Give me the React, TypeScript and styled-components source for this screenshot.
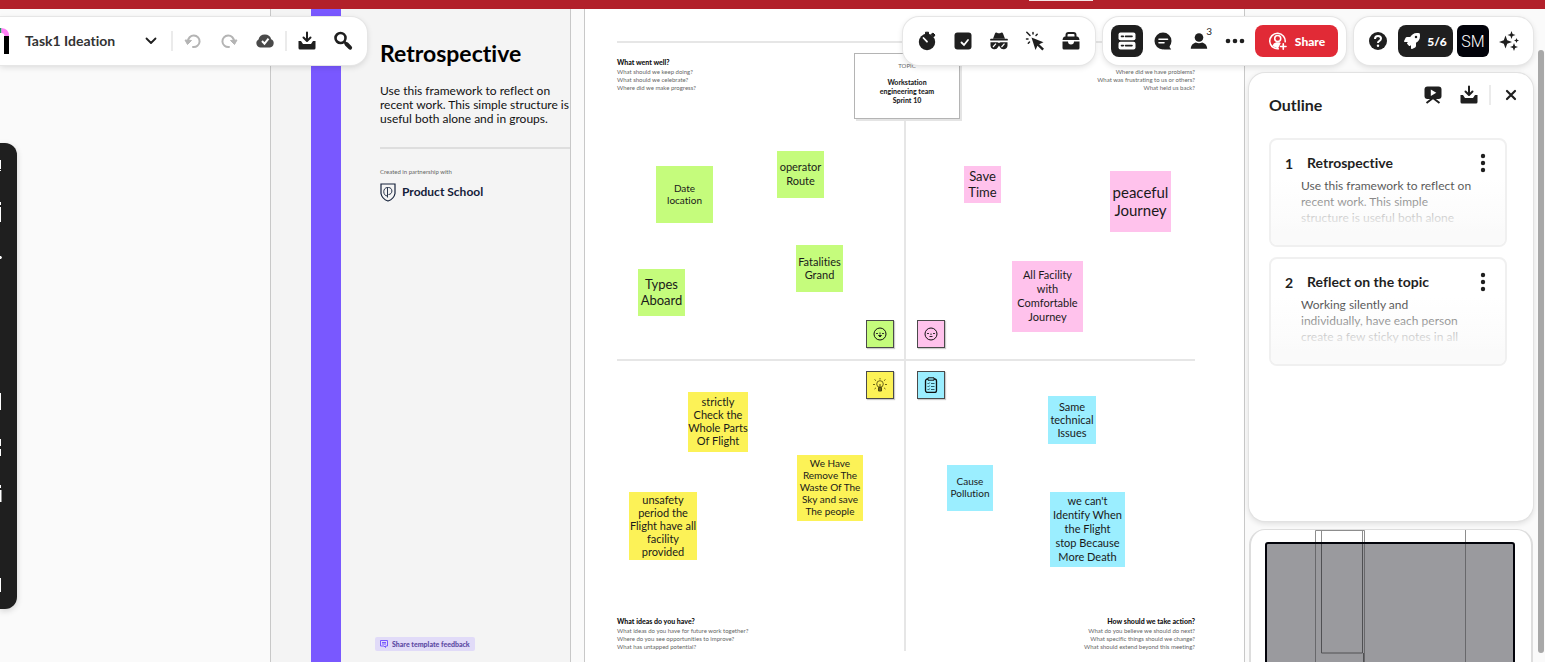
import React from "react";
import styled, { createGlobalStyle } from "styled-components";
import { FaRocket } from "react-icons/fa";

const ink = "#1f1f1f";

const GlobalStyle = createGlobalStyle`
  * { box-sizing: border-box; }
  body {
    margin: 0;
    overflow: hidden;
    font-family: Lato, "Liberation Sans", sans-serif;
    font-variant-ligatures: none;
    color: ${ink};
    background: #fafafa;
  }
  button { font: inherit; color: inherit; cursor: pointer; }
  h1, h2, h3, p, ol, ul { margin: 0; padding: 0; }
  ol, ul { list-style: none; }
  svg { display: block; flex: none; }
`;

const Page = styled.div`
  display: flex;
  flex-direction: column;
  height: 100vh;
`;

const BrowserEdge = styled.div`
  flex: none;
  height: 9px;
  padding-left: 1029px;
  background: #b2202a;
`;

const EdgeTab = styled.div`
  width: 64px;
  height: 1px;
  background: #f4e4e5;
`;

const Workspace = styled.div`
  position: relative;
  flex: 1;
  min-height: 0;
  overflow: hidden;
`;

/* Canvas */

const Canvas = styled.main`
  display: flex;
  gap: 13px;
  height: 100%;
  padding-left: 270px;
`;

const Template = styled.section`
  flex: none;
  display: flex;
  width: 301px;
  border: solid #c8c8c8;
  border-width: 0 1px;
  background: #f4f4f4;
`;

const Stripe = styled.div`
  flex: none;
  width: 30px;
  margin-left: 40px;
  background: #7958ff;
`;

const TemplateBody = styled.div`
  flex: 1;
  display: flex;
  flex-direction: column;
  padding: 28px 0 11px 39px;
`;

const TemplateTitle = styled.h1`
  font-size: 23px;
  line-height: 32px;
  color: #000;
`;

const TemplateText = styled.p`
  margin-top: 15px;
  font-size: 12px;
  line-height: 14px;
  white-space: nowrap;
  color: #111;
`;

const Divider = styled.hr`
  width: 100%;
  height: 2px;
  margin: 21px 0 19px;
  border: 0;
  background: #dedede;
`;

const Small = styled.p`
  font-size: 6px;
  line-height: 8px;
  color: #666;
`;

const Partner = styled.div`
  display: flex;
  align-items: center;
  gap: 6px;
  margin-top: 6px;
  font-size: 12px;
  font-weight: 700;
  line-height: 20px;
  color: #14213a;
`;

const Feedback = styled.button`
  display: flex;
  align-items: center;
  gap: 4px;
  align-self: flex-start;
  height: 14px;
  margin: auto 0 0 -5px;
  padding: 0 5px;
  border: 0;
  border-radius: 2px;
  background: #e1dbf8;
  color: #5c4aa3;
  font-size: 7px;
  font-weight: 900;
`;

const Board = styled.section`
  position: relative;
  flex: none;
  width: 661px;
  padding: 32px 49px 0 32px;
  border: solid #c8c8c8;
  border-width: 0 1px;
  background: #fff;
`;

const Quadrants = styled.div`
  display: grid;
  grid-template-columns: 1fr 1fr;
  grid-template-rows: 318px 290px;
  border-top: 2px solid #e6e6e6;
`;

const Quadrant = styled.section<{ $right?: boolean; $bottom?: boolean }>`
  display: flex;
  flex-direction: column;
  justify-content: ${(p) => (p.$bottom ? "flex-end" : "flex-start")};
  padding: ${(p) => (p.$bottom ? "0" : "15px 0 0")};
  text-align: ${(p) => (p.$right ? "right" : "left")};
  border: solid #e6e6e6;
  border-width: 0 ${(p) => (p.$right ? 0 : 2)}px ${(p) => (p.$bottom ? 0 : 2)}px 0;
`;

const QuadrantTitle = styled.h2`
  margin-bottom: 1px;
  font-size: 7px;
  font-weight: 900;
  line-height: 9px;
  color: #111;
`;

const Topic = styled.div`
  position: absolute;
  top: 44px;
  left: 269px;
  width: 106px;
  height: 66px;
  padding-top: 8px;
  border: 1px solid #b4b4b4;
  box-shadow: 2px 2px 0 #e4e4e4;
  background: #fff;
  text-align: center;
  font-size: 7px;
  line-height: 9px;
`;

const TopicName = styled.p`
  margin: 8px 16px 0;
  font-weight: 900;
`;

type NoteProps = { $x: number; $y: number; $w: number; $color: string; $size: number; $line: number };

const Note = styled.div<NoteProps>`
  position: absolute;
  left: ${(p) => p.$x}px;
  top: ${(p) => p.$y}px;
  width: ${(p) => p.$w}px;
  height: ${(p) => p.$w}px;
  display: flex;
  align-items: center;
  justify-content: center;
  padding-bottom: 2px;
  background: ${(p) => p.$color};
  color: #1a1a1a;
  font-size: ${(p) => p.$size}px;
  line-height: ${(p) => p.$line}px;
  text-align: center;
  white-space: pre;
`;

const Marker = styled.div<{ $x: number; $y: number; $color: string }>`
  position: absolute;
  left: ${(p) => p.$x}px;
  top: ${(p) => p.$y}px;
  width: 28px;
  height: 28px;
  display: grid;
  place-items: center;
  border: 1px solid #4a4a4a;
  box-shadow: 1px 1px 1px #ccc;
  background: ${(p) => p.$color};
`;

/* Floating chrome */

const Chrome = styled.div`
  position: absolute;
  inset: 0;
  display: flex;
  flex-direction: column;
  gap: 8px;
  padding: 8px 12px 0 0;
`;

const TopRow = styled.header`
  display: flex;
  gap: 8px;
`;

const Bar = styled.div<{ $docked?: boolean }>`
  display: flex;
  align-items: center;
  gap: 4px;
  height: 48px;
  padding: 0 8px;
  padding-left: ${(p) => (p.$docked ? 0 : 8)}px;
  margin-right: ${(p) => (p.$docked ? "auto" : 0)};
  border-radius: ${(p) => (p.$docked ? "0 16px 16px 0" : "16px")};
  background: #fff;
  box-shadow: 0 0 0 1px #e6e6e6, 0 2px 6px rgba(0, 0, 0, 0.14);
`;

const IconButton = styled.button<{ $active?: boolean; $muted?: boolean }>`
  position: relative;
  flex: none;
  display: grid;
  place-items: center;
  width: 32px;
  height: 32px;
  padding: 0;
  border: 0;
  border-radius: 8px;
  background: ${(p) => (p.$active ? ink : "transparent")};
  color: ${(p) => (p.$active ? "#fff" : p.$muted ? "#b4b4b4" : ink)};
`;

const Count = styled.span`
  position: absolute;
  top: 1px;
  right: 3px;
  font-size: 10px;
  line-height: 10px;
`;

const Separator = styled.span`
  flex: none;
  width: 2px;
  height: 20px;
  background: #ebebeb;
`;

const BoardName = styled.h1`
  width: 106px;
  margin-left: 12px;
  font-size: 14px;
  font-weight: 700;
  line-height: 20px;
  white-space: nowrap;
  color: #333;
`;

const Pill = styled.button<{ $color: string; $width: number }>`
  display: flex;
  align-items: center;
  justify-content: center;
  gap: 7px;
  width: ${(p) => p.$width}px;
  height: 32px;
  padding: 0;
  border: 0;
  border-radius: 8px;
  background: ${(p) => p.$color};
  color: #fff;
  font-size: 12px;
  font-weight: 900;
`;

const Avatar = styled.button`
  width: 32px;
  height: 32px;
  padding: 0;
  border: 0;
  border-radius: 6px;
  background: #02030a;
  color: #fff;
  font-family: Roboto, sans-serif;
  font-size: 16px;
  font-weight: 300;
`;

const SideColumn = styled.aside`
  flex: 1;
  min-height: 0;
  display: flex;
  flex-direction: column;
  gap: 8px;
  width: 284px;
  margin-left: auto;
`;

const Panel = styled.section`
  flex: none;
  min-height: 448px;
  padding: 6px 6px 0 20px;
  border-radius: 16px;
  background: #fff;
  box-shadow: 0 0 0 1px #e2e2e2, 0 2px 6px rgba(0, 0, 0, 0.14);
`;

const PanelHead = styled.div`
  display: flex;
  height: 36px;
`;

const PanelTitle = styled.h2`
  margin-right: auto;
  padding-top: 16px;
  font-size: 16px;
  line-height: 20px;
`;

const PanelActions = styled.div`
  display: flex;
  align-items: center;
  gap: 4px;
  height: 32px;
`;

const Cards = styled.ol`
  display: flex;
  flex-direction: column;
  gap: 10px;
  width: 238px;
  margin-top: 23px;
`;

const Card = styled.li`
  position: relative;
  height: 109px;
  padding: 13px 14px 0 14px;
  border: 2px solid #f0f0f0;
  border-radius: 8px;
`;

const CardHead = styled.div`
  display: flex;
  align-items: center;
  height: 20px;
  font-size: 14px;
  font-weight: 700;
`;

const CardIndex = styled.span`
  width: 22px;
`;

const CardTitle = styled.h3`
  font-size: 14px;
  line-height: 20px;
`;

const Kebab = styled(IconButton)`
  z-index: 1;
  width: 20px;
  margin: 0 -2px 0 auto;
`;

const CardText = styled.p`
  padding: 5px 0 0 16px;
  font-size: 12px;
  line-height: 16px;
  white-space: pre;
  color: #3a3a3a;
`;

const Fade = styled.div`
  position: absolute;
  inset: 38px 0 0;
  border-radius: 0 0 6px 6px;
  background: linear-gradient(rgba(255, 255, 255, 0), rgba(251, 251, 251, 0.8) 60%, #fafafa 80%);
`;

const Minimap = styled.section`
  flex: 1;
  min-height: 0;
  overflow: hidden;
  border: 2px solid #ddd;
  border-width: 1px 2px 0;
  border-radius: 16px 16px 0 0;
  background: #fff;
`;

const ToolRail = styled.nav`
  position: absolute;
  left: 0;
  top: 134px;
  display: flex;
  flex-direction: column;
  justify-content: space-between;
  width: 17px;
  height: 466px;
  border-radius: 0 12px 12px 0;
  background: ${ink};
  box-shadow: 0 2px 6px rgba(0, 0, 0, 0.16);
`;

const RailGroup = styled.div`
  display: flex;
  flex-direction: column;
`;

const RailButton = styled.button`
  display: flex;
  align-items: center;
  width: 17px;
  height: 46px;
  padding: 0;
  border: 0;
  background: none;
  color: #fff;
`;

const ScrollThumb = styled.div`
  position: absolute;
  top: 41px;
  right: 1px;
  bottom: 9px;
  width: 6px;
  border-radius: 3px;
  background: #a8a8a8;
`;

/* Icons */

type IconProps = { size?: number; children: React.ReactNode; box?: number };

const Icon = ({ size = 20, box = 20, children }: IconProps) => (
  <svg width={size} height={size} viewBox={`0 0 ${box} ${box}`} fill="none" aria-hidden="true">
    {children}
  </svg>
);

const line = { stroke: "currentColor", strokeWidth: 2, strokeLinecap: "round", strokeLinejoin: "round" } as const;

const DownloadIcon = () => (
  <Icon>
    <path d="M10 1.500v8M6.500 6.500 10 10l3.500-3.500" {...line} />
    <path d="M1.500 10h2.500l2 3h8l2-3h2.500v7q0 1.500-1.500 1.500h-14q-1.500 0-1.500-1.500z" fill="currentColor" />
  </Icon>
);

const UndoIcon = () => (
  <Icon>
    <path d="M5 10.500a5.800 5.800 0 1 1 5 5.500" stroke="currentColor" strokeWidth="2" strokeLinecap="round" />
    <path d="m2 9 6.500.5L4.500 13.500z" fill="currentColor" stroke="currentColor" strokeLinejoin="round" />
  </Icon>
);

const RedoIcon = () => (
  <Icon>
    <path d="M15 10.500a5.800 5.800 0 1 0-5 5.500" stroke="currentColor" strokeWidth="2" strokeLinecap="round" />
    <path d="m18 9-6.500.5 4 4z" fill="currentColor" stroke="currentColor" strokeLinejoin="round" />
  </Icon>
);

const CloudIcon = () => (
  <Icon>
    <path d="M5.500 16.500A4.300 4.300 0 0 1 3.500 8.500 6.600 6.600 0 0 1 16.200 8.200 4.400 4.400 0 0 1 15 16.500z" fill="#4a4a4a" />
    <path d="m7 10 2.500 2.700 4-5" stroke="#fff" strokeWidth="2" />
  </Icon>
);

const SearchIcon = () => (
  <Icon>
    <circle cx="7.500" cy="7" r="5" stroke="currentColor" strokeWidth="2.600" />
    <path d="m11.500 11 1.500 1.500" stroke="currentColor" strokeWidth="2.500" />
    <path d="m13.500 13 3.600 3.700" stroke="currentColor" strokeWidth="4" strokeLinecap="round" />
  </Icon>
);

const TimerIcon = () => (
  <Icon>
    <circle cx="10" cy="11" r="8.200" fill="currentColor" />
    <path d="M8.500 1.200h3V4h-3zM14 3.500l2-1.500 2 2-1.500 2z" fill="currentColor" stroke="currentColor" strokeLinejoin="round" />
    <path d="m6.500 7 3.500 3.700" stroke="#fff" strokeWidth="1.800" strokeLinecap="round" />
  </Icon>
);

const VoteIcon = () => (
  <Icon>
    <rect x="1.500" y="1.500" width="17" height="17" rx="3" fill="currentColor" />
    <path d="m8.500 11.500 2.500 2.500 4-5" stroke="#fff" strokeWidth="1.800" strokeLinecap="round" />
  </Icon>
);

const IncognitoIcon = () => (
  <Icon>
    <path d="M4 7.700 6 2.500q.5-1.500 2-.8 2 1 4 0 1.500-.7 2 .8l2 5.200z" fill="currentColor" />
    <path d="M2 8.700h16" {...line} strokeWidth="1.800" />
    <path d="M1.500 11.200h7l1.500.8 1.500-.8h7v3.300a4 4 0 0 1-7.600 1.500L10 14.500 9.100 16a4 4 0 0 1-7.600-1.500z" fill="currentColor" />
    <path d="m4 16 3-3.300M12.500 16l3-3.300" stroke="#fff" strokeWidth="1.200" />
  </Icon>
);

const ClickIcon = () => (
  <Icon>
    <path d="m6.500 6.500 12 4.700-4.300 2 4.800 4.600-1.700 1.700-4.800-4.700-2 4.200z" fill="currentColor" />
    <path d="M1.800 1.200 5 4.500M8 1.500v1.500M11 4.500l1.200-1.200M1.500 8H3M4.500 11l-1.200 1.200" stroke="currentColor" strokeWidth="1.500" strokeLinecap="round" />
  </Icon>
);

const ToolboxIcon = () => (
  <Icon>
    <path d="M5.500 6V4Q5.500 2 7.500 2h5q2 0 2 2v2" stroke="currentColor" strokeWidth="2" />
    <path d="M4 5.500h12q1.500 0 2 1.500l.5 2h-17L2 7q.5-1.500 2-1.500zM1.500 10.500h5.500q0 3 3 3t3-3h5.500V17q0 1.500-1.500 1.500H3q-1.500 0-1.500-1.500z" fill="currentColor" />
  </Icon>
);

const OutlineIcon = () => (
  <Icon>
    <rect x="1.500" y="1.500" width="17" height="7.800" rx="2" fill="currentColor" />
    <rect x="1.500" y="10.700" width="17" height="7.800" rx="2" fill="currentColor" />
    <path d="M4.500 5.400h1.800M8.500 5.400h6.500M4.500 14.600h1.800M8.500 14.600h6.500" stroke={ink} strokeWidth="1.600" strokeLinecap="round" />
  </Icon>
);

const ChatIcon = () => (
  <Icon>
    <circle cx="10" cy="10" r="8.500" fill="currentColor" />
    <path d="M16.500 12v4l1.700 2.500H11z" fill="currentColor" />
    <path d="M6 8.200h8.500M6 11.700h5" stroke="#fff" strokeWidth="1.600" strokeLinecap="round" />
  </Icon>
);

const PersonIcon = () => (
  <Icon>
    <circle cx="10" cy="6.500" r="4.300" fill="currentColor" />
    <path d="M1.800 17.800c0-4 3-5.800 5-6.300q3.200 1.400 6.400 0c2 .5 5 2.300 5 6.300z" fill="currentColor" />
  </Icon>
);

const DotsIcon = ({ vertical }: { vertical?: boolean }) => (
  <Icon>
    {[3, 10, 17].map((n) => (
      <circle key={n} cx={vertical ? 10 : n} cy={vertical ? n : 10} r={vertical ? 2.2 : 2.3} fill="currentColor" />
    ))}
  </Icon>
);

const ShareIcon = () => (
  <Icon size={20} box={22}>
    <path d="M18.800 12.500A8.500 8.500 0 1 0 12 19.400" stroke="currentColor" strokeWidth="1.700" />
    <circle cx="10.700" cy="8.300" r="3.300" stroke="currentColor" strokeWidth="1.700" />
    <path d="M4.800 16.500q1-3.300 4.200-4h3.500l1.500.8-3 6z" fill="currentColor" />
    <path d="M16.800 14v6M13.800 17h6" stroke="currentColor" strokeWidth="1.800" strokeLinecap="round" />
  </Icon>
);

const HelpIcon = () => (
  <Icon>
    <circle cx="10" cy="10" r="9" fill="currentColor" />
    <path d="M7 8q0-3 3-3t3 2.600q0 1.500-1.500 2.300T10 12" stroke="#fff" strokeWidth="2" />
    <circle cx="10" cy="14.800" r="1.200" fill="#fff" />
  </Icon>
);

const SparkleIcon = () => (
  <Icon>
    <path d="M6.500 4.500 8.200 9.300 13 11l-4.800 1.700L6.500 17.500l-1.700-4.800L0 11l4.800-1.700zM12.500 0l1.100 2.900 2.900 1.100-2.900 1.100L12.500 8l-1.100-2.900L8.500 4l2.900-1.100zM15 12l1.100 2.900L19 16l-2.900 1.100L15 20l-1.100-2.900L11 16l2.900-1.100zM17.500 7l.7 1.800 1.800.7-1.800.7-.7 1.800-.7-1.800-1.800-.7 1.800-.7z" fill="currentColor" />
  </Icon>
);

const PresentIcon = () => (
  <Icon>
    <rect x="1.500" y="1.500" width="17" height="12.500" rx="3" fill="currentColor" />
    <path d="M7.800 4.500v6.500l5.500-3.200z" fill="#fff" />
    <path d="m3.500 18 6.500-5 6.500 5" stroke="currentColor" strokeWidth="2" />
  </Icon>
);

const LogoMark = () => (
  <svg width="9" height="26" viewBox="0 0 9 26" role="img" aria-label="Mural">
    <path d="M0 0h1.500v5H0z" fill="#1e9a62" />
    <path d="M1.500 0Q9 .5 9 8H4.500Q4.500 5 1.500 5z" fill="#ff7ff5" />
    <path d="M4 8h5v18H4z" fill="#000" />
  </svg>
);

const Shield = () => (
  <svg width="16" height="19" viewBox="0 0 16 19" fill="none" aria-hidden="true">
    <path d="M1 1h14v9.500Q14 16 8 18 2 16 1 10.500z" stroke="#14213a" strokeWidth="1.200" />
    <path d="M7.500 14.500V4.500C2.500 4.500 2.500 13 7.500 13M7.500 4.500h1c4.500 0 4.500 7 0 7" stroke="#14213a" strokeWidth=".9" />
  </svg>
);

const Face = ({ sad }: { sad?: boolean }) => (
  <Icon size={14} box={14}>
    <circle cx="7" cy="7" r="6" stroke="#111" />
    <path d="M3 6.500h2M9 6.500h2" stroke="#333" />
    <path d={sad ? "M5.500 9.500h3M7 6.500v1.500" : "M5.500 8.500Q7 11.500 8.500 8.500zM7 5.500v2"} stroke="#222" />
  </Icon>
);

const Bulb = () => (
  <Icon size={16} box={16}>
    <circle cx="8" cy="7" r="3.300" stroke="#6d6517" />
    <path d="M6.500 10.500h3v3.500h-3zM8 7v4" fill="#6d6517" stroke="#4e4810" />
    <path d="M8 1v1.500M2.500 2.500l1.500 1.200M13.500 2.500 12 3.700M1 7.500h2M13 7.500h2M2.500 12l1.500-1.200M13.500 12 12 10.800" stroke="#6d6517" />
  </Icon>
);

const Checklist = () => (
  <Icon size={16} box={16}>
    <rect x="2.500" y="2" width="11" height="13.500" rx="2" stroke="#111" strokeWidth="1.300" />
    <path d="M5 .8h6v2.400H5z" fill="#9beeff" stroke="#111" />
    <path d="m4.500 6 1 1 1.200-1.500M4.500 9l1 1 1.200-1.500M4.500 12l1 1 1.200-1.500M8 6.500h3.500M8 9.500h3.500M8 12.500h3.500" stroke="#1d4a55" strokeWidth=".9" />
  </Icon>
);

/* Data */

const green = "#c5fc7c";
const pink = "#ffc2ec";
const yellow = "#fcf257";
const blue = "#9beeff";

const notes = [
  { x: 71, y: 157, w: 57, color: green, size: 10, line: 12, text: "Date\nlocation" },
  { x: 192, y: 142, w: 47, color: green, size: 11, line: 14, text: "operator\nRoute" },
  { x: 211, y: 236, w: 47, color: green, size: 11, line: 13, text: "Fatalities\nGrand" },
  { x: 53, y: 260, w: 47, color: green, size: 13, line: 16, text: "Types\nAboard" },
  { x: 379, y: 157, w: 37, color: pink, size: 13, line: 16, text: "Save\nTime" },
  { x: 525, y: 162, w: 61, color: pink, size: 15, line: 18, text: "peaceful\nJourney" },
  { x: 427, y: 252, w: 71, color: pink, size: 11, line: 14, text: "All Facility\nwith\nComfortable\nJourney" },
  { x: 103, y: 383, w: 60, color: yellow, size: 11, line: 13, text: "strictly\nCheck the\nWhole Parts\nOf Flight" },
  { x: 212, y: 446, w: 66, color: yellow, size: 10, line: 12, text: "We Have\nRemove The\nWaste Of The\nSky and save\nThe people" },
  { x: 44, y: 483, w: 68, color: yellow, size: 11, line: 13, text: "unsafety\nperiod the\nFlight have all\nfacility\nprovided" },
  { x: 463, y: 387, w: 48, color: blue, size: 11, line: 13, text: "Same\ntechnical\nIssues" },
  { x: 362, y: 456, w: 46, color: blue, size: 10, line: 12, text: "Cause\nPollution" },
  { x: 465, y: 483, w: 75, color: blue, size: 11, line: 14, text: "we can't\nIdentify When\nthe Flight\nstop Because\nMore Death" },
];

const quadrants = [
  { title: "What went well?", lines: ["What should we keep doing?", "What should we celebrate?", "Where did we make progress?"] },
  { title: "What went poorly?", lines: ["Where did we have problems?", "What was frustrating to us or others?", "What held us back?"], right: true },
  { title: "What ideas do you have?", lines: ["What ideas do you have for future work together?", "Where do you see opportunities to improve?", "What has untapped potential?"], bottom: true },
  { title: "How should we take action?", lines: ["What do you believe we should do next?", "What specific things should we change?", "What should extend beyond this meeting?"], right: true, bottom: true },
];

const outline = [
  { title: "Retrospective", text: "Use this framework to reflect on\nrecent work. This simple\nstructure is useful both alone" },
  { title: "Reflect on the topic", text: "Working silently and\nindividually, have each person\ncreate a few sticky notes in all" },
];

const railTop = [
  { label: "Sticky note", path: "M0 4h1v9H0zM0 14h1v1H0z" },
  { label: "Shapes", path: "M0 0h1v3H0zM0 5h1v12H0zM0 17h1v3H0z" },
  { label: "Icons", path: "M0 8h1l1 1.500-1 1.500H0z" },
];
const railBottom = [
  { label: "Images", path: "M0 1h1v17H0z" },
  { label: "Templates", path: "M0 1h1v7H0zM0 11h1v7H0z" },
  { label: "Draw", path: "M0 1h1v3H0zM0 6h1.500v12H0z" },
  { label: "Help", path: "" },
  { label: "Activity", path: "M0 2h1v14H0z" },
];

const Rail = ({ items }: { items: typeof railTop }) => (
  <RailGroup>
    {items.map((item) => (
      <RailButton key={item.label} aria-label={item.label}>
        <svg width="3" height="20" viewBox="0 0 3 20" aria-hidden="true">
          <path d={item.path} fill="currentColor" />
        </svg>
      </RailButton>
    ))}
  </RailGroup>
);

export default function App() {
  return (
    <Page>
      <GlobalStyle />
      <BrowserEdge>
        <EdgeTab />
      </BrowserEdge>
      <Workspace>
        <Canvas>
          <Template>
            <Stripe />
            <TemplateBody>
              <TemplateTitle>Retrospective</TemplateTitle>
              <TemplateText>
                Use this framework to reflect on
                <br />
                recent work. This simple structure is
                <br />
                useful both alone and in groups.
              </TemplateText>
              <Divider />
              <Small>Created in partnership with</Small>
              <Partner>
                <Shield />
                Product School
              </Partner>
              <Feedback>
                <svg width="8" height="8" viewBox="0 0 8 8" fill="none" aria-hidden="true">
                  <path d="M.5.5h7v5.500H5.500v1.500L4 6H.5zM2 2.500h4M2 4h4" stroke="#7958ff" />
                </svg>
                Share template feedback
              </Feedback>
            </TemplateBody>
          </Template>
          <Board>
            <Quadrants>
              {quadrants.map((q) => (
                <Quadrant key={q.title} $right={q.right} $bottom={q.bottom}>
                  <QuadrantTitle>{q.title}</QuadrantTitle>
                  {q.lines.map((text) => (
                    <Small key={text}>{text}</Small>
                  ))}
                </Quadrant>
              ))}
            </Quadrants>
            <Topic>
              <Small>TOPIC</Small>
              <TopicName>Workstation engineering team Sprint 10</TopicName>
            </Topic>
            {notes.map((n) => (
              <Note key={n.text} $x={n.x} $y={n.y} $w={n.w} $color={n.color} $size={n.size} $line={n.line}>
                {n.text}
              </Note>
            ))}
            <Marker $x={281} $y={311} $color={green}><Face /></Marker>
            <Marker $x={332} $y={311} $color={pink}><Face sad /></Marker>
            <Marker $x={281} $y={362} $color={yellow}><Bulb /></Marker>
            <Marker $x={332} $y={362} $color={blue}><Checklist /></Marker>
          </Board>
        </Canvas>

        <Chrome>
          <TopRow>
            <Bar $docked>
              <LogoMark />
              <BoardName>Task1 Ideation</BoardName>
              <IconButton aria-label="Mural menu">
                <Icon><path d="m5.500 7.500 4.500 4.500 4.500-4.500" {...line} strokeWidth="1.800" /></Icon>
              </IconButton>
              <Separator />
              <IconButton $muted aria-label="Undo"><UndoIcon /></IconButton>
              <IconButton $muted aria-label="Redo"><RedoIcon /></IconButton>
              <IconButton aria-label="Saved"><CloudIcon /></IconButton>
              <Separator />
              <IconButton aria-label="Export"><DownloadIcon /></IconButton>
              <IconButton aria-label="Search"><SearchIcon /></IconButton>
            </Bar>
            <Bar>
              <IconButton aria-label="Timer"><TimerIcon /></IconButton>
              <IconButton aria-label="Vote"><VoteIcon /></IconButton>
              <IconButton aria-label="Private mode"><IncognitoIcon /></IconButton>
              <IconButton aria-label="Laser pointer"><ClickIcon /></IconButton>
              <IconButton aria-label="Toolbox"><ToolboxIcon /></IconButton>
            </Bar>
            <Bar>
              <IconButton $active aria-label="Outline"><OutlineIcon /></IconButton>
              <IconButton aria-label="Comments"><ChatIcon /></IconButton>
              <IconButton aria-label="Members"><PersonIcon /><Count>3</Count></IconButton>
              <IconButton aria-label="More"><DotsIcon /></IconButton>
              <Pill $color="#e12a36" $width={83}><ShareIcon />Share</Pill>
            </Bar>
            <Bar>
              <IconButton aria-label="Help center"><HelpIcon /></IconButton>
              <Pill $color={ink} $width={55}><FaRocket size={16} aria-hidden="true" />5/6</Pill>
              <Avatar>SM</Avatar>
              <IconButton aria-label="Assistant"><SparkleIcon /></IconButton>
            </Bar>
          </TopRow>

          <SideColumn>
            <Panel>
              <PanelHead>
                <PanelTitle>Outline</PanelTitle>
                <PanelActions>
                  <IconButton aria-label="Present"><PresentIcon /></IconButton>
                  <IconButton aria-label="Download outline"><DownloadIcon /></IconButton>
                  <Separator />
                  <IconButton aria-label="Close">
                    <Icon><path d="m6 6 8 8M14 6l-8 8" {...line} strokeWidth="2.200" /></Icon>
                  </IconButton>
                </PanelActions>
              </PanelHead>
              <Cards>
                {outline.map((item, i) => (
                  <Card key={item.title}>
                    <CardHead>
                      <CardIndex>{i + 1}</CardIndex>
                      <CardTitle>{item.title}</CardTitle>
                      <Kebab aria-label="Options"><DotsIcon vertical /></Kebab>
                    </CardHead>
                    <CardText>{item.text}</CardText>
                    <Fade />
                  </Card>
                ))}
              </Cards>
            </Panel>
            <Minimap aria-label="Minimap">
              <svg width="280" height="200" viewBox="0 0 280 200" fill="none">
                <rect x="15" y="13" width="248" height="240" rx="2" fill="#9a9a9e" />
                <path d="M64.500 13V0.500h49V13M70.500 13V0M111.500 13V0M214.500 13V0" stroke="#8d8d8d" />
                <path d="M64.500 13v190M113.500 13v190M214.500 13v190" stroke="#68686b" strokeWidth="1" />
                <path d="M70.500 13v110h41V13M112.500 123v80" stroke="#505053" />
                <rect x="15" y="13" width="248" height="240" rx="2" stroke="#02030a" strokeWidth="2" />
              </svg>
            </Minimap>
          </SideColumn>
        </Chrome>

        <ToolRail aria-label="Tools">
          <Rail items={railTop} />
          <Rail items={railBottom} />
        </ToolRail>
        <ScrollThumb />
      </Workspace>
    </Page>
  );
}
